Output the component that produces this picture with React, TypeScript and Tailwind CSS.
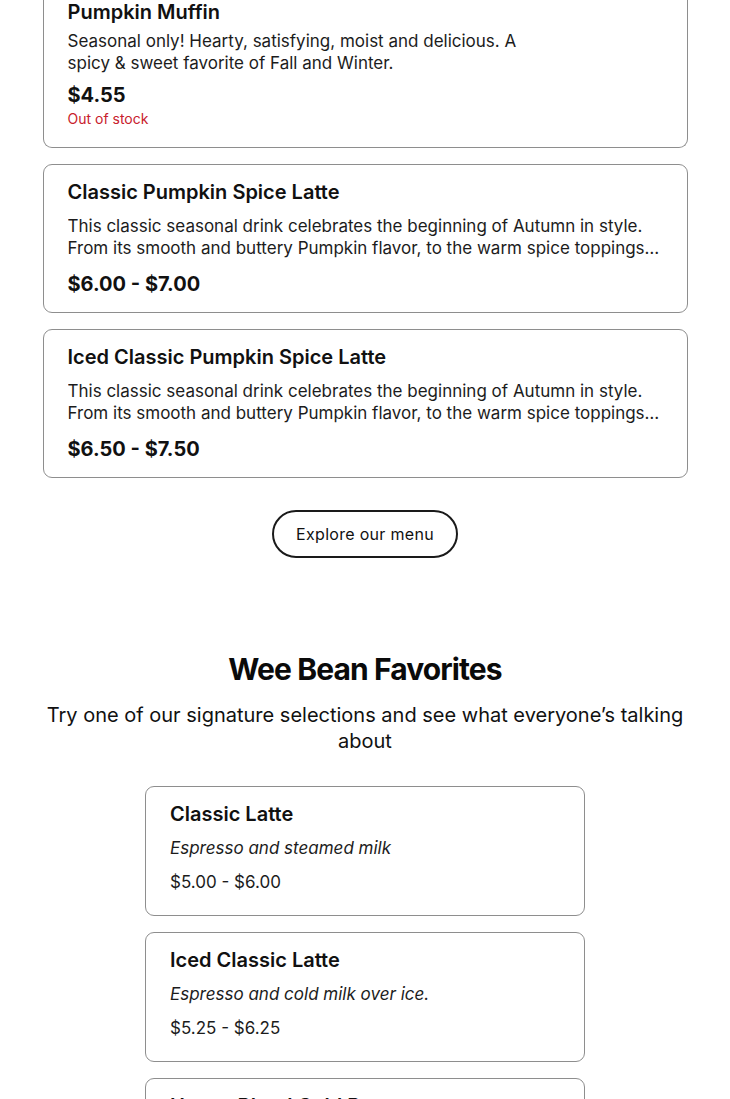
import React from 'react';

interface MenuItem {
  name: string;
  description: string;
  price: string;
}

const seasonal: MenuItem[] = [
  {
    name: 'Classic Pumpkin Spice Latte',
    description:
      'This classic seasonal drink celebrates the beginning of Autumn in style. From its smooth and buttery Pumpkin flavor, to the warm spice toppings and whipped cream, this latte is a true fall favorite.',
    price: '$6.00 - $7.00',
  },
  {
    name: 'Iced Classic Pumpkin Spice Latte',
    description:
      'This classic seasonal drink celebrates the beginning of Autumn in style. From its smooth and buttery Pumpkin flavor, to the warm spice toppings and whipped cream, this latte is a true fall favorite.',
    price: '$6.50 - $7.50',
  },
];

const favorites: MenuItem[] = [
  { name: 'Classic Latte', description: 'Espresso and steamed milk', price: '$5.00 - $6.00' },
  { name: 'Iced Classic Latte', description: 'Espresso and cold milk over ice.', price: '$5.25 - $6.25' },
  { name: 'Honey Blend Cold Brew', description: 'Cold brew sweetened with honey.', price: '$5.50 - $6.50' },
];

function SeasonalCard({ item }: { item: MenuItem }) {
  return (
    <div className="border border-[#8e8e8e] rounded-[9px] px-6 pt-[15px] pb-4 bg-white">
      <h3 className="text-[20px] leading-6 font-semibold text-[#111]">{item.name}</h3>
      <p className="mt-3 text-[17px] leading-[21.5px] text-[#1c1c1c] line-clamp-2">{item.description}</p>
      <div className="mt-[13px] text-[20px] leading-6 font-bold text-[#111]">{item.price}</div>
    </div>
  );
}

function FavoriteCard({ item }: { item: MenuItem }) {
  return (
    <div className="w-[440px] border border-[#8e8e8e] rounded-[9px] px-6 pt-[14px] pb-5 bg-white">
      <h3 className="text-[20px] leading-[26px] font-semibold text-[#111]">{item.name}</h3>
      <p className="mt-2 text-[17px] leading-[26px] italic text-[#1c1c1c]">{item.description}</p>
      <div className="mt-2 text-[17px] leading-[26px] text-[#1c1c1c]">{item.price}</div>
    </div>
  );
}

export default function App() {
  return (
    <div className="bg-white min-h-screen overflow-hidden" style={{ fontFamily: 'Inter, "Noto Sans", sans-serif' }}>
      <div className="w-[645px] mx-auto">
        <div className="flex flex-col gap-4">
          <div className="border border-[#8e8e8e] border-t-0 rounded-b-[9px] px-6 pt-0 pb-[18px] bg-white">
            <h3 className="text-[20px] leading-6 font-semibold text-[#111]">Pumpkin Muffin</h3>
            <p className="mt-[6px] max-w-[470px] text-[17px] leading-[22px] text-[#1c1c1c]">
              Seasonal only! Hearty, satisfying, moist and delicious. A spicy &amp; sweet favorite of Fall and Winter.
            </p>
            <div className="mt-[9px] text-[20px] leading-6 font-bold text-[#111]">$4.55</div>
            <div className="mt-[2px] text-[14px] leading-5 text-[#c8202c]">Out of stock</div>
          </div>
          {seasonal.map((item) => (
            <SeasonalCard key={item.name} item={item} />
          ))}
        </div>

        <div className="flex justify-center mt-8">
          <button className="h-[48px] px-[22px] rounded-full border-2 border-[#1a1a1a] text-[16px] tracking-[0.3px] text-[#111] bg-white">
            Explore our menu
          </button>
        </div>

        <section className="mt-[93px] flex flex-col items-center">
          <h2 className="text-[30px] leading-9 font-bold tracking-[-0.9px] text-[#0a0a0a]">Wee Bean Favorites</h2>
          <p className="mt-[15px] text-center text-[20px] leading-[26px] text-[#111]">
            Try one of our signature selections and see what everyone’s talking about
          </p>
          <div className="mt-8 flex flex-col gap-4">
            {favorites.map((item) => (
              <FavoriteCard key={item.name} item={item} />
            ))}
          </div>
        </section>
      </div>
    </div>
  );
}
